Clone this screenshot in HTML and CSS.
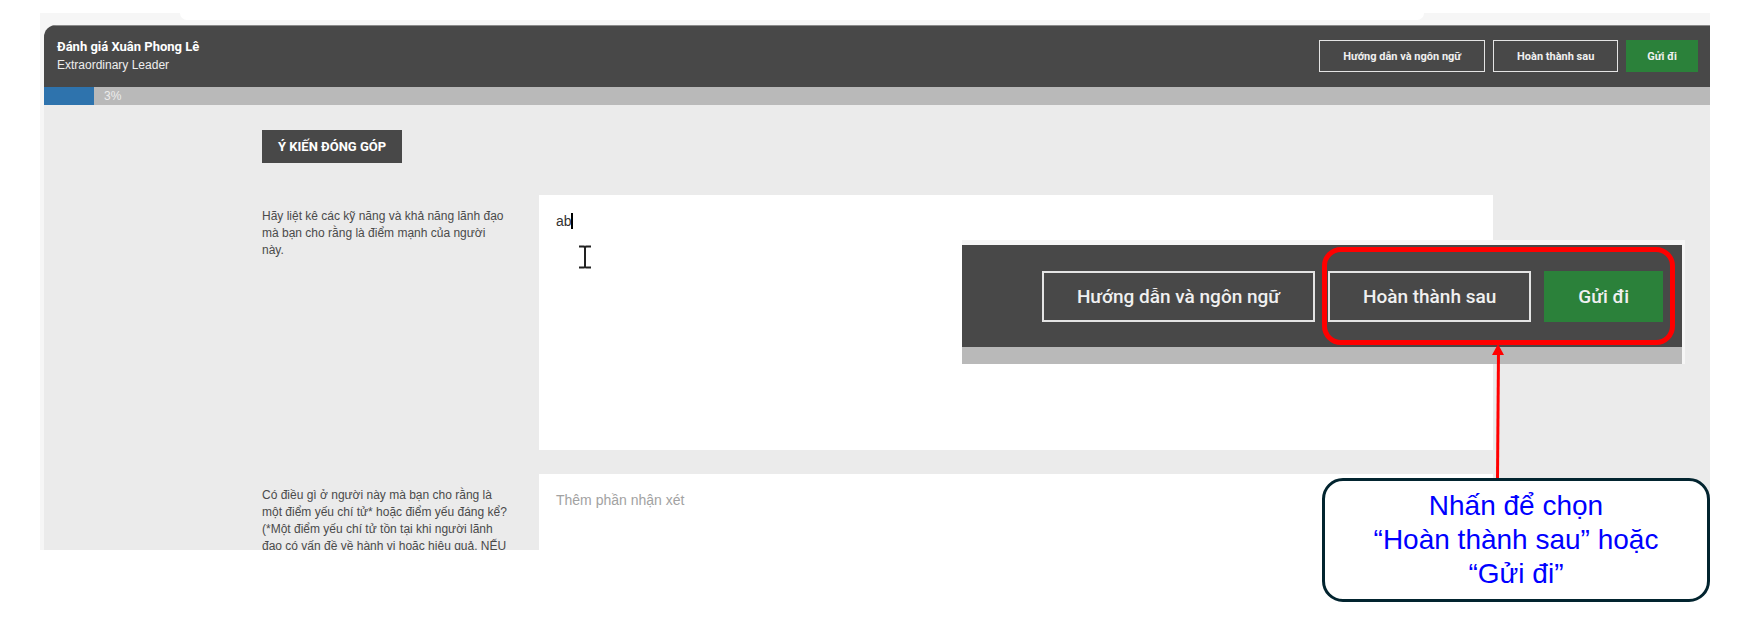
FILE: index.html
```html
<!DOCTYPE html>
<html lang="vi">
<head>
    <meta charset="UTF-8">
    <meta name="viewport" content="width=device-width, initial-scale=1.0">
    <title>Đánh giá Xuân Phong Lê</title>
    <link rel="stylesheet" href="styles.css">
</head>
<body>
    <div class="slide">
        <div class="screen">
            <div class="browser-bar"><div class="address"></div></div>
            <div class="app">
                <header class="topbar">
                    <div class="title">
                        <strong>Đánh giá Xuân Phong Lê</strong>
                        <span>Extraordinary Leader</span>
                    </div>
                    <div class="actions">
                        <button type="button">Hướng dẫn và ngôn ngữ</button>
                        <button type="button">Hoàn thành sau</button>
                        <button type="button" class="send">Gửi đi</button>
                    </div>
                </header>
                <div class="progress">
                    <div class="progress-fill" style="width: 3%"></div>
                    <span>3%</span>
                </div>
                <main>
                    <h2>Ý KIẾN ĐÓNG GÓP</h2>
                    <div class="question">
                        <label for="strengths">Hãy liệt kê các kỹ năng và khả năng lãnh đạo<br>mà bạn cho rằng là điểm mạnh của người<br>này.</label>
                        <div class="field">
                            <textarea id="strengths">ab</textarea>
                            <span class="caret"></span>
                            <svg class="ibeam" width="14" height="24" viewBox="0 0 14 24">
                                <path d="M1 1.5H6L7 2.5L8 1.5H13M7 2.5V21.5M1 22.5H6L7 21.5L8 22.5H13" fill="none" stroke="#222" stroke-width="2"/>
                            </svg>
                        </div>
                    </div>
                    <div class="question">
                        <label for="flaws">Có điều gì ở người này mà bạn cho rằng là<br>một điểm yếu chí tử* hoặc điểm yếu đáng kể?<br>(*Một điểm yếu chí tử tồn tại khi người lãnh<br>đạo có vấn đề về hành vi hoặc hiệu quả. NẾU</label>
                        <div class="field">
                            <textarea id="flaws" placeholder="Thêm phần nhận xét"></textarea>
                        </div>
                    </div>
                </main>
            </div>
        </div>

        <!-- enlarged copy of the header buttons -->
        <div class="zoomed">
            <div class="zoomed-bar">
                <button type="button">Hướng dẫn và ngôn ngữ</button>
                <button type="button">Hoàn thành sau</button>
                <button type="button" class="send">Gửi đi</button>
            </div>
        </div>
        <div class="highlight"></div>
        <svg class="arrow" width="12" height="134" viewBox="0 0 12 134">
            <path d="M6.5 8L5.5 134" stroke="#f00" stroke-width="3"/>
            <path d="M6 0L12 11H0Z" fill="#f00"/>
        </svg>
        <div class="callout">Nhấn để chọn<br>“Hoàn thành sau” hoặc<br>“Gửi đi”</div>
    </div>
</body>
</html>
```
FILE: styles.css
```css
* {
    box-sizing: border-box;
}
body {
    margin: 0;
    background: #fff;
    font-family: "Liberation Sans", Arial, sans-serif;
    font-size: 12px;
    color: #4a4a4a;
}
.slide {
    position: relative;
    height: 100vh;
    padding: 13px 52px 73px 40px;
    overflow: hidden;
}
.screen {
    height: 100%;
    display: flex;
    flex-direction: column;
    padding-left: 4px;
    background: #f6f6f6;
    overflow: hidden;
}
.browser-bar {
    flex: none;
    height: 12px;
    padding: 0 286px 0 136px;
}
.address {
    height: 7px;
    background: #fff;
    border-radius: 0 0 12px 12px;
}
.app {
    flex: 1;
    min-height: 0;
    background: #ebebeb;
    border-radius: 12px 0 0 0;
    overflow: hidden;
}
.topbar {
    display: flex;
    justify-content: space-between;
    align-items: flex-start;
    height: 62px;
    padding: 12px 12px 0 13px;
    background: #484848;
    border-top: 1px solid #8a8a8a;
    color: #fff;
}
.title {
    display: flex;
    flex-direction: column;
    line-height: 18px;
}
.title strong {
    font-family: Roboto, sans-serif;
    font-size: 13px;
}
.title span {
    color: #eee;
}
.actions {
    display: flex;
    gap: 8px;
    padding-top: 2px;
}
button {
    height: 32px;
    padding: 0 23px;
    background: #484848;
    border: 1px solid #e4e4e4;
    color: #f0f0f0;
    font-family: Roboto, sans-serif;
    font-size: 11px;
    font-weight: 700;
    white-space: nowrap;
    cursor: pointer;
}
button.send {
    padding: 0 20px;
    background: #2b813a;
    border-color: #2b813a;
}
.progress {
    display: flex;
    align-items: center;
    gap: 10px;
    height: 18px;
    background: #b9b9b9;
    color: #ececec;
}
.progress-fill {
    height: 100%;
    background: #2e73ad;
}
main {
    padding: 25px 217px 0 218px;
}
h2 {
    width: max-content;
    margin: 0 0 32px;
    padding: 0 16px;
    background: #484848;
    color: #fff;
    font-family: Roboto, sans-serif;
    font-size: 13px;
    line-height: 33px;
}
.question {
    display: grid;
    grid-template-columns: 260px minmax(0, 1fr);
    column-gap: 17px;
    margin-bottom: 24px;
}
.question label {
    padding-top: 13px;
    line-height: 17px;
}
.field {
    position: relative;
    height: 255px;
}
textarea {
    display: block;
    width: 100%;
    height: 100%;
    padding: 17px;
    border: 0;
    outline: 0;
    resize: none;
    background: #fff;
    color: #333;
    font-family: inherit;
    font-size: 14px;
    line-height: 18px;
}
textarea::placeholder {
    color: #a2a2a2;
}
.caret {
    position: absolute;
    left: 32px;
    top: 18px;
    width: 2px;
    height: 16px;
    background: #000;
}
.ibeam {
    position: absolute;
    left: 39px;
    top: 50px;
}
.zoomed {
    position: absolute;
    top: 240px;
    right: 77px;
    width: 723px;
    padding: 5px 3px 0 0;
    background: #f6f6f6;
}
.zoomed-bar {
    display: flex;
    justify-content: flex-end;
    gap: 13px;
    padding: 26px 19px 25px;
    background: #484848;
    border-bottom: 17px solid #b9b9b9;
}
.zoomed button {
    height: 51px;
    padding: 0 33px;
    border-width: 2px;
    font-size: 19px;
    font-weight: 500;
}
.zoomed button.send {
    padding: 0 32px;
}
.highlight {
    position: absolute;
    top: 247px;
    right: 87px;
    width: 353px;
    height: 98px;
    border: 5px solid #f00;
    border-radius: 19px;
}
.arrow {
    position: absolute;
    top: 344px;
    right: 258px;
}
.callout {
    position: absolute;
    top: 478px;
    right: 52px;
    width: 388px;
    padding: 8px 10px;
    background: #fff;
    border: 3px solid #02242f;
    border-radius: 21px;
    color: #00f;
    font-size: 28px;
    line-height: 34px;
    text-align: center;
}
```
